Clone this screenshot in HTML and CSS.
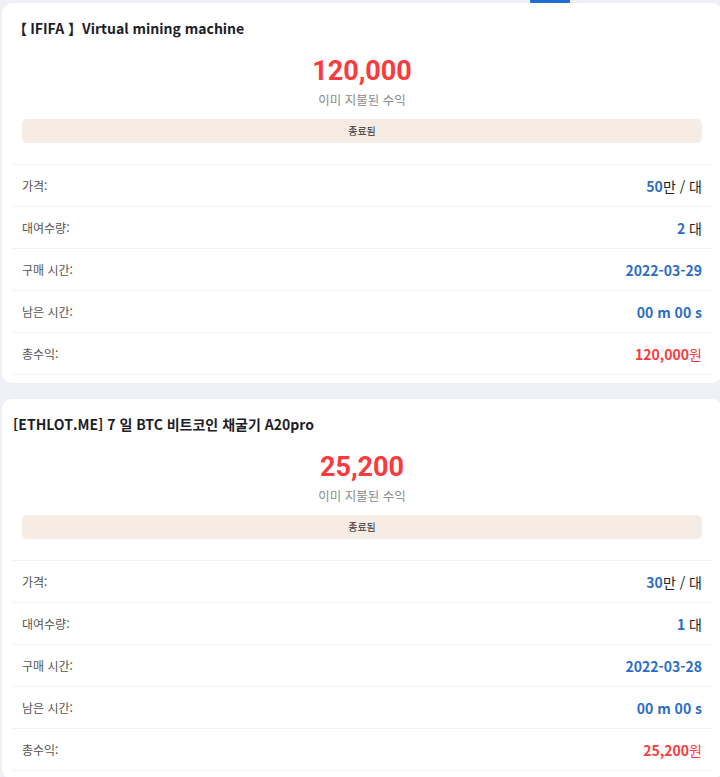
FILE: index.html
```html
<!DOCTYPE html>
<html lang="ko">
<head>
<meta charset="utf-8">
<title>Mining</title>
<link rel="stylesheet" href="styles.css">
</head>
<body>
<div class="tabs"><span class="tab-ind"></span></div>
<div class="list">
  <div class="card">
    <div class="title">【 IFIFA 】Virtual mining machine</div>
    <div class="amount">120,000</div>
    <div class="amount-label">이미 지불된 수익</div>
    <div class="status">종료됨</div>
    <div class="rows">
      <div class="row"><span class="lbl">가격:</span><span class="val"><b class="blue">50</b>만 / 대</span></div>
      <div class="row"><span class="lbl">대여수량:</span><span class="val"><b class="blue">2</b> 대</span></div>
      <div class="row"><span class="lbl">구매 시간:</span><span class="val"><b class="blue">2022-03-29</b></span></div>
      <div class="row"><span class="lbl">남은 시간:</span><span class="val"><b class="blue">00 m 00 s</b></span></div>
      <div class="row"><span class="lbl">총수익:</span><span class="val red"><b>120,000</b>원</span></div>
    </div>
  </div>
  <div class="card">
    <div class="title">[ETHLOT.ME] 7 일 BTC 비트코인 채굴기 A20pro</div>
    <div class="amount">25,200</div>
    <div class="amount-label">이미 지불된 수익</div>
    <div class="status">종료됨</div>
    <div class="rows">
      <div class="row"><span class="lbl">가격:</span><span class="val"><b class="blue">30</b>만 / 대</span></div>
      <div class="row"><span class="lbl">대여수량:</span><span class="val"><b class="blue">1</b> 대</span></div>
      <div class="row"><span class="lbl">구매 시간:</span><span class="val"><b class="blue">2022-03-28</b></span></div>
      <div class="row"><span class="lbl">남은 시간:</span><span class="val"><b class="blue">00 m 00 s</b></span></div>
      <div class="row"><span class="lbl">총수익:</span><span class="val red"><b>25,200</b>원</span></div>
    </div>
  </div>
</div>
</body>
</html>
```

FILE: styles.css
```css
* { box-sizing: border-box; }
html, body { margin: 0; padding: 0; }
body {
  background: #eef0f5;
  font-family: "Noto Sans CJK KR", "Noto Sans", sans-serif;
  color: #222;
  overflow: hidden;
  width: 720px;
}
.tabs {
  height: 3px;
  display: flex;
}
.tab-ind {
  display: block;
  width: 40px;
  height: 3px;
  margin-left: 530px;
  background: #1e6fcf;
  border-radius: 0 0 1px 1px;
}
.list {
  display: flex;
  flex-direction: column;
  gap: 16px;
  padding-left: 2px;
}
.card {
  width: 720px;
  flex: none;
  background: #fff;
  border-radius: 10px;
  padding: 15px 10px 8px;
}
.title {
  font-size: 14px;
  line-height: 20px;
  font-weight: 700;
  color: #1d1d28;
  padding-left: 1px;
}
.amount {
  margin-top: 16px;
  text-align: center;
  font-family: Roboto, "Noto Sans", sans-serif;
  font-weight: 700;
  font-size: 27px;
  line-height: 34px;
  color: #fa3a3d;
}
.amount-label {
  margin-top: 4px;
  text-align: center;
  font-size: 12.5px;
  line-height: 16px;
  color: #8a8a8a;
}
.status {
  margin: 11px 10px 0;
  height: 24px;
  line-height: 24px;
  border-radius: 5px;
  background: #f6ece4;
  text-align: center;
  font-size: 10px;
  color: #333;
}
.rows {
  margin-top: 21px;
  border-bottom: 1px solid #f1f1f8;
}
.row {
  height: 42px;
  border-top: 1px solid #f1f1f8;
  display: flex;
  align-items: center;
  justify-content: space-between;
  padding: 0 10px;
}
.lbl {
  font-size: 12px;
  color: #555;
}
.val {
  font-size: 14px;
  color: #222;
}
.val b { font-weight: 700; }
.blue { color: #2a6dc6; }
.red { color: #fa3a3d; }
```
